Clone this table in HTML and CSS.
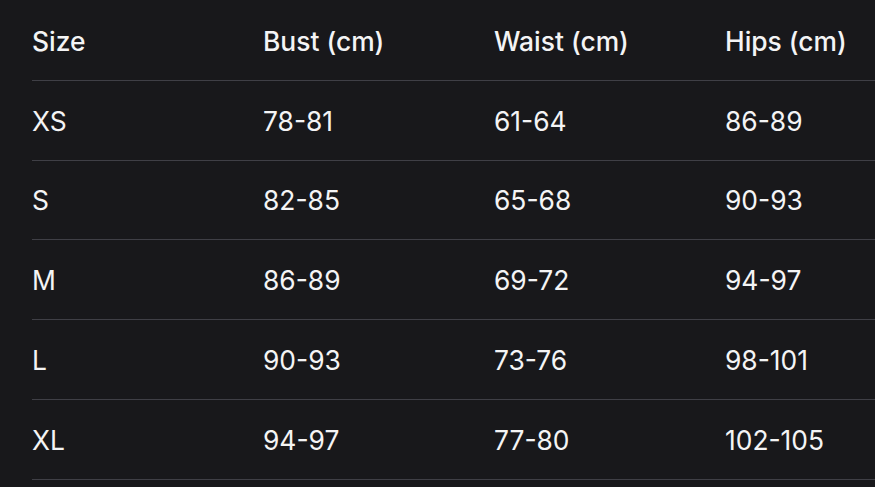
FILE: index.html
```html
<!DOCTYPE html>
<html lang="en">
<head>
<meta charset="utf-8">
<title>Size chart</title>
<link rel="stylesheet" href="styles.css">
</head>
<body>
<div class="wrap">
  <table class="chart">
    <thead>
      <tr><th>Size</th><th>Bust (cm)</th><th>Waist (cm)</th><th>Hips (cm)</th></tr>
    </thead>
    <tbody>
      <tr><td>XS</td><td>78-81</td><td>61-64</td><td>86-89</td></tr>
      <tr><td>S</td><td>82-85</td><td>65-68</td><td>90-93</td></tr>
      <tr><td>M</td><td>86-89</td><td>69-72</td><td>94-97</td></tr>
      <tr><td>L</td><td>90-93</td><td>73-76</td><td>98-101</td></tr>
      <tr><td>XL</td><td>94-97</td><td>77-80</td><td>102-105</td></tr>
    </tbody>
  </table>
</div>
</body>
</html>
```

FILE: styles.css
```css
html, body {
  margin: 0;
  padding: 0;
  background: #18181b;
  overflow: hidden;
}
.wrap {
  padding: 1px 0 0 32px;
  width: 1000px;
}
.chart {
  border-collapse: collapse;
  table-layout: fixed;
  width: 924px;
  font-family: Inter, "Noto Sans", sans-serif;
  font-size: 26.4px;
  color: #f4f4f5;
}
.chart th,
.chart td {
  width: 231px;
  height: 77.8px;
  padding: 1px 0 0 0;
  text-align: left;
  vertical-align: middle;
  border-bottom: 1px solid #3f3f46;
  line-height: 34px;
}
.chart th {
  font-weight: 500;
}
.chart td {
  font-weight: 400;
}
```
